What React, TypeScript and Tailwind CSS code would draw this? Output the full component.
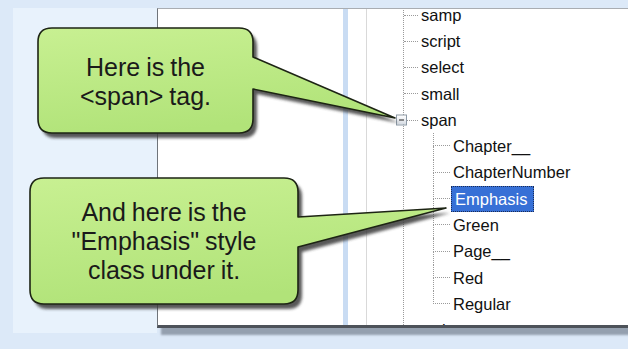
import React from "react";

const FONT = { fontFamily: '"Liberation Sans", Arial, sans-serif' };

const topItems = ["samp", "script", "select", "small"];
const children = ["Chapter__", "ChapterNumber", "Emphasis", "Green", "Page__", "Red", "Regular"];

function TopRow({ label, expander }: { label: string; expander?: boolean }) {
  return (
    <div className="relative flex h-[26.27px] items-center">
      {expander && (
        <div className="absolute left-[-8px] top-1/2 flex h-[11px] w-[11px] -translate-y-1/2 items-center justify-center border border-[#8d9aa6] bg-gradient-to-b from-white to-[#d5dbe3]">
          <div className="h-[1px] w-[5px] bg-[#222]" />
        </div>
      )}
      <div className={`${expander ? "ml-[3px] w-[11px]" : "w-[14px]"} h-0 border-t border-dotted border-[#9a9a9a]`} />
      <span className="ml-[3px] text-[16.5px] leading-none text-[#111]">{label}</span>
    </div>
  );
}

function ChildRow({ label, last, selected }: { label: string; last?: boolean; selected?: boolean }) {
  return (
    <div className="flex h-[26.27px] items-stretch">
      <div className="flex w-[17px] flex-col">
        <div className="h-1/2 border-b border-l border-dotted border-[#9a9a9a]" />
        <div className={`flex-1 ${last ? "" : "border-l border-dotted border-[#9a9a9a]"}`} />
      </div>
      <div className="flex items-center">
        {selected ? (
          <span className="ml-[1px] flex h-[26px] items-center border border-dotted border-[#1b2c55] bg-[#3770d6] pl-[3px] pr-[6px] text-[16.5px] leading-none text-white">
            {label}
          </span>
        ) : (
          <span className="ml-[3px] text-[16.5px] leading-none text-[#111]">{label}</span>
        )}
      </div>
    </div>
  );
}

function Callouts() {
  const p1 =
    "M 52 28 H 239 Q 253 28 253 42 V 57 L 395 118 L 253 89 V 119 Q 253 133 239 133 H 52 Q 38 133 38 119 V 42 Q 38 28 52 28 Z";
  const p2 =
    "M 44 178 H 284 Q 298 178 298 192 V 217 L 446 208 L 298 247 V 290 Q 298 304 284 304 H 44 Q 30 304 30 290 V 192 Q 30 178 44 178 Z";
  return (
    <svg className="pointer-events-none absolute left-0 top-0" width="628" height="349" viewBox="0 0 628 349">
      <defs>
        <linearGradient id="g" x1="0" y1="0" x2="0.3" y2="1">
          <stop offset="0" stopColor="#c8f092" />
          <stop offset="1" stopColor="#b1e379" />
        </linearGradient>
        <filter id="b" x="-10%" y="-10%" width="130%" height="130%">
          <feGaussianBlur stdDeviation="1.5" />
        </filter>
      </defs>
      <g transform="translate(4 5)" filter="url(#b)" opacity="0.85">
        <path d={p1} fill="#3a3a3a" />
        <path d={p2} fill="#3a3a3a" />
      </g>
      <path d={p1} fill="url(#g)" stroke="#1d2414" strokeWidth="1.6" strokeLinejoin="round" />
      <path d={p2} fill="url(#g)" stroke="#1d2414" strokeWidth="1.6" strokeLinejoin="round" />
    </svg>
  );
}

export default function App() {
  return (
    <div className="relative h-[349px] w-[628px] overflow-hidden bg-[#dce9f8]" style={FONT}>
      <div className="flex pl-[13px] pt-[8px]">
        <div className="h-[325px] w-[144px] bg-[#e8f2fc]" />
        <div className="flex h-[320px] flex-1 border-b-[3px] border-l border-t border-b-[#4d5259] border-l-[#6f747a] border-t-[#a9adb2] bg-white shadow-[4px_7px_2px_rgba(90,100,115,0.55)]">
          <div className="w-[185px]" />
          <div className="w-[5px] bg-[#c9dcf3]" />
          <div className="w-[18px]" />
          <div className="w-[1px] bg-[#d9d9d9]" />
          <div className="relative flex-1 overflow-hidden">
            <div className="ml-[36px] mt-[-7px] border-l border-dotted border-[#9a9a9a]">
              {topItems.map((t) => (
                <TopRow key={t} label={t} />
              ))}
              <TopRow label="span" expander />
              <div className="pl-[29px]">
                {children.map((c, i) => (
                  <ChildRow key={c} label={c} last={i === children.length - 1} selected={c === "Emphasis"} />
                ))}
              </div>
              <TopRow label="style" />
            </div>
          </div>
        </div>
      </div>

      <Callouts />

      <div className="absolute left-[38px] top-[28px] flex h-[105px] w-[215px] flex-col items-center justify-center pt-[3px] text-[25px] leading-[29px] text-[#1a1a1a] [word-spacing:-1px]">
        <div>Here is the</div>
        <div>&lt;span&gt; tag.</div>
      </div>
      <div className="absolute left-[30px] top-[178px] flex h-[126px] w-[268px] flex-col items-center justify-center text-[25px] leading-[29px] text-[#1a1a1a] [word-spacing:-1px]">
        <div>And here is the</div>
        <div>"Emphasis" style</div>
        <div>class under it.</div>
      </div>
    </div>
  );
}
